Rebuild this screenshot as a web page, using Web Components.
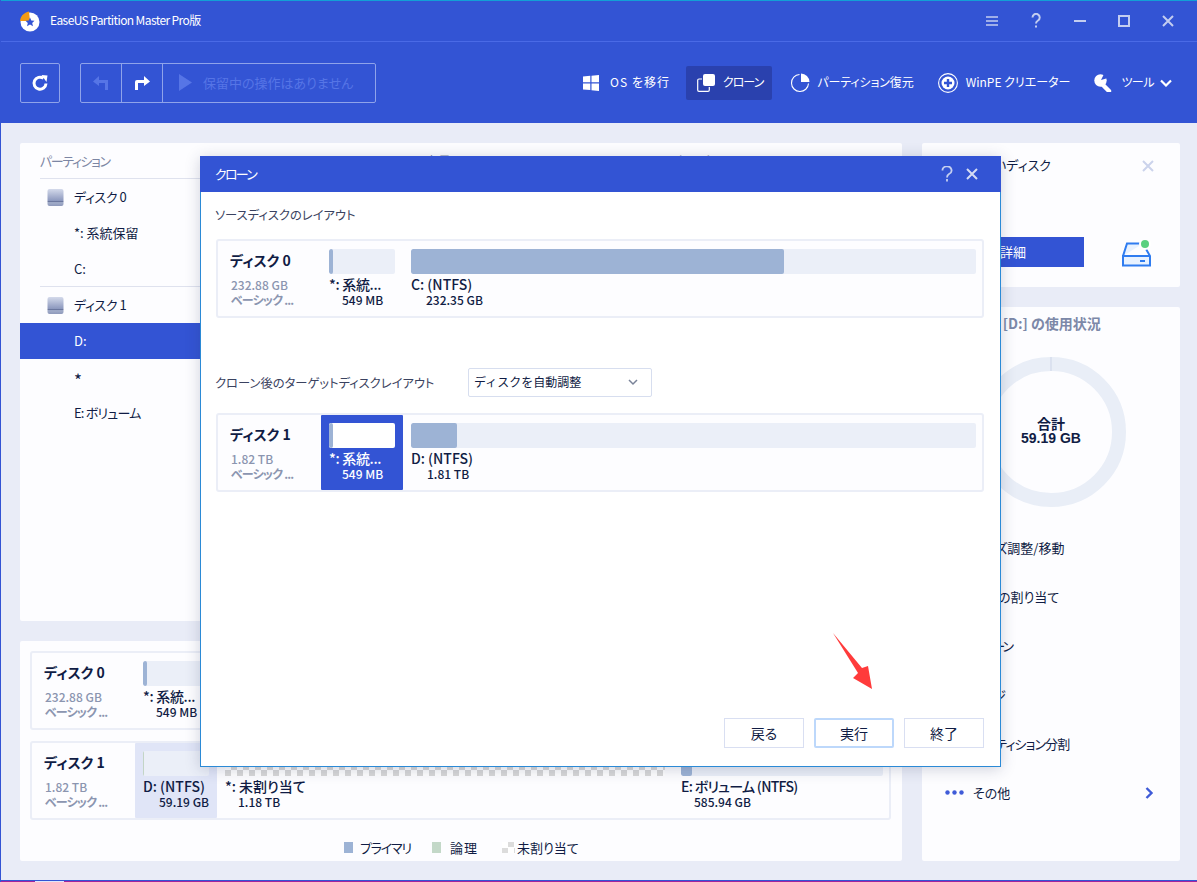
<!DOCTYPE html>
<html lang="ja"><head><meta charset="utf-8"><title>EaseUS</title>
<style>
html,body{margin:0;padding:0;width:1197px;height:882px;overflow:hidden;background:#e9ecf7}
body{font:13px/1.2 "Noto Sans CJK JP","Noto Sans",sans-serif;font-feature-settings:"palt";color:#101c44}
</style></head><body>
<em-app>
  <em-titlebar slot="head"></em-titlebar>
  <em-toolbar slot="head"></em-toolbar>
  <em-panel slot="main" style="height:478px"><part-list></part-list></em-panel>
  <em-panel slot="main" style="height:220px;margin-top:20px"><disk-map></disk-map></em-panel>
  <em-panel slot="side" style="height:144px"><news-card></news-card></em-panel>
  <em-panel slot="side" style="height:554px;margin-top:20px"><usage-card></usage-card></em-panel>
  <clone-dialog slot="over"></clone-dialog>
</em-app>
<script>
const def=(name,html)=>{customElements.define(name,class extends HTMLElement{
  constructor(){super();this.attachShadow({mode:'open'}).innerHTML=html;}
});};

def('em-app',`<style>
:host{display:block;position:relative;width:1197px;height:882px;box-sizing:border-box;border-left:1px solid #3354d4;overflow:hidden}
header{margin-left:-1px;background:#3354d4;height:123px;border-top:1px solid #12a0d6;box-sizing:border-box}
.body{display:grid;grid-template-columns:882px 258px;gap:20px;padding:20px 0 0 19px}
.edge{position:absolute;left:-1px;right:0;bottom:0;height:2px;background:linear-gradient(#3354d4 50%,#a3249c 50%)}
.edge i{display:block;margin:1px 0 0 35px;width:29px;height:1px;background:#dfe6fb}
</style><header><slot name="head"></slot></header>
<div class="body"><div><slot name="main"></slot></div><div><slot name="side"></slot></div></div>
<slot name="over"></slot><div class="edge"><i></i></div>`);

def('em-panel',`<style>:host{display:block;background:#fdfdff;border-radius:2px;overflow:hidden;box-sizing:border-box}</style><slot></slot>`);

def('em-titlebar',`<style>
:host{display:flex;align-items:center;height:40px;border-bottom:1px solid #4a6ae6;padding-left:20px;color:#fff;font-size:12px}
svg.logo{width:20px;height:22px;margin-right:10px}
span{flex:1;margin-top:-1px;letter-spacing:-.6px}
.w{display:flex;gap:28px;padding-right:21px}
svg.b{width:16px;height:16px;fill:none;stroke:#c3cdf0;stroke-width:2;display:block}
</style>
<svg class="logo" viewBox="0 0 20 22"><circle cx="10" cy="12" r="9.500" fill="#fff"/><path d="M0 11C.5 6 4 2.500 9 1.500L10 11Z" fill="#f39a12"/><path d="M10 7.500L11.300 10.500 14.500 10.800 12.200 13 13 16.200 10 14.600 7 16.200 7.800 13 5.500 10.800 8.700 10.500Z" fill="#3354d4"/></svg>
<span>EaseUS Partition Master Pro版</span>
<div class="w">
<svg class="b" viewBox="0 0 16 16" style="stroke-width:1.700"><path d="M2 4h12M2 8h12M2 12h12"/></svg>
<svg class="b" viewBox="0 0 16 16"><path d="M4.500 4.500a3.600 3.600 0 1 1 5.500 3c-1.500.9-2 1.500-2 3"/><path d="M8 12.500v2"/></svg>
<svg class="b" viewBox="0 0 16 16"><path d="M2 8h12"/></svg>
<svg class="b" viewBox="0 0 16 16"><path d="M3 3h10v10H3z"/></svg>
<svg class="b" viewBox="0 0 16 16"><path d="M3 3l10 10M13 3L3 13"/></svg>
</div>`);

def('tool-btn',`<style>
:host{display:flex;align-items:center;height:34px;color:#fff;font-size:12px;gap:8px;border-radius:2px;white-space:nowrap}
:host([active]){background:#2a41ae;padding:0 9px 0 11px}
</style><slot name="icon"></slot><slot></slot>`);

def('em-toolbar',`<style>
:host{display:flex;align-items:center;height:81px;padding:0 25px 0 20px;box-sizing:border-box}
.box{border:1px solid #8fa3ea;border-radius:2px;height:40px;box-sizing:border-box;display:flex;align-items:stretch}
.cell{width:41px;display:flex;align-items:center;justify-content:center;border-right:1px solid #8fa3ea;box-sizing:border-box}
.cell.last{width:auto;flex:1;border:0;justify-content:flex-start;padding-left:16px;gap:11px;color:#5675e6;font-size:13px;white-space:nowrap}
.grp{margin-left:20px;width:296px}
.nav{margin-left:auto;display:flex;align-items:center}
</style>
<div class="box" style="width:40px"><div class="cell" style="border:0;width:38px"><svg width="18" height="18" viewBox="0 0 18 18"><path d="M15 9.500A6 6 0 1 1 12.500 4.300" fill="none" stroke="#fff" stroke-width="3"/><path d="M10.500 1L16.500 1.500 15.500 8Z" fill="#fff"/></svg></div></div>
<div class="box grp">
<div class="cell"><svg width="18" height="16" viewBox="0 0 18 16"><path d="M7 1L1 6.500 7 11V8H13V15H16V5H7Z" fill="#5675e6"/></svg></div>
<div class="cell"><svg width="18" height="16" viewBox="0 0 18 16"><path d="M11 1L17 6.500 11 11V8H5V15H2V7Q2 5 4 5H11Z" fill="#fff"/></svg></div>
<div class="cell last"><svg width="13" height="17" viewBox="0 0 13 17"><path d="M0 0L13 8.500 0 17Z" fill="#5675e6"/></svg><span>保留中の操作はありません</span></div>
</div>
<div class="nav">
<tool-btn style="gap:11px;letter-spacing:1px"><svg slot="icon" width="16" height="16" viewBox="0 0 16 16" fill="#fff"><path d="M0 1.500L7.300 .8V7.300H0ZM8.500 .7L16 0V7.300H8.500ZM0 8.500H7.300V15L0 14.400ZM8.500 8.500H16V16L8.500 15.200Z"/></svg>OS を移行</tool-btn>
<tool-btn active style="margin-left:16px;letter-spacing:-1px"><svg slot="icon" width="18" height="18" viewBox="0 0 18 18"><rect x="6" y="0" width="12" height="12" rx="2" fill="#fff"/><path d="M5 5H2Q.7 5 .7 6.300V16Q.7 17.300 2 17.300H11Q12.300 17.300 12.300 16V13" fill="none" stroke="#fff" stroke-width="1.200"/></svg>クローン</tool-btn>
<tool-btn style="margin-left:18px;gap:7px;letter-spacing:-.1px"><svg slot="icon" width="20" height="20" viewBox="0 0 20 20"><path d="M9.500 1.500A8.500 8.500 0 1 0 18.500 10.500" fill="none" stroke="#fff" stroke-width="1.100"/><path d="M11 .5A8.700 8.700 0 0 1 19.500 9H11Z" fill="#fff"/></svg>パーティション復元</tool-btn>
<tool-btn style="margin-left:24px"><svg slot="icon" width="20" height="20" viewBox="0 0 20 20"><circle cx="10" cy="10" r="9.400" fill="none" stroke="#fff" stroke-width="1.100"/><circle cx="10" cy="10" r="6.500" fill="#fff"/><path d="M10 6v8M6 10h8" stroke="#3354d4" stroke-width="2.400"/></svg>WinPE クリエーター</tool-btn>
<tool-btn style="margin-left:24px;gap:9px"><svg slot="icon" width="18" height="18" viewBox="0 0 18 18"><circle cx="6.500" cy="6.500" r="6.200" fill="#fff"/><path d="M7 9L15 17" stroke="#fff" stroke-width="4.400" stroke-linecap="round"/><path d="M7 6L10 0H14V4Z" fill="#3354d4"/></svg><span style="letter-spacing:-.5px;margin-right:6px">ツール</span><svg width="12" height="8" viewBox="0 0 12 8" style="margin-left:-9px"><path d="M1 1.500L6 6.500 11 1.500" fill="none" stroke="#fff" stroke-width="2.200"/></svg></tool-btn>
</div>`);

def('part-row',`<style>
:host{display:flex;align-items:center;height:36px;padding-left:54px;color:#101c44;font-size:13px;box-sizing:border-box;position:relative}
:host([disk]){padding-left:27px;gap:10px;letter-spacing:-.4px}
:host([sel]){background:#3354d4;color:#fff}
:host([line])::after{content:"";position:absolute;left:20px;right:20px;bottom:0;height:1px;background:#dfe2ee}
svg{display:none;width:17px;height:17px;margin-top:1px}
:host([disk]) svg{display:block}
</style><svg viewBox="0 0 17 17"><defs><linearGradient id="g" x1="0" y1="0" x2="0" y2="1"><stop offset="0" stop-color="#d4daeb"/><stop offset=".7" stop-color="#8b97bd"/><stop offset=".72" stop-color="#5e6a94"/><stop offset=".8" stop-color="#a2adca"/><stop offset="1" stop-color="#8e99bb"/></linearGradient></defs><rect x="0.500" y="0" width="16" height="17" rx="2" fill="url(#g)"/></svg><slot></slot>`);

def('part-list',`<style>
:host{display:block}
.h{display:grid;grid-template-columns:250px 135px 250px 1fr;align-items:center;height:36px;padding-left:20px;color:#7c86a3;font-size:13px;position:relative}
.h::after{content:"";position:absolute;left:20px;right:20px;bottom:0;height:1px;background:#dfe2ee}
.h span:first-child{letter-spacing:-1.400px}
.big{font-size:17px;line-height:16px;margin-top:6px}
</style><div class="h"><span>パーティション</span><span>ファイルシステム</span><span>容量</span><span>タイプ</span></div>
<part-row disk>ディスク 0</part-row><part-row>*: 系統保留</part-row><part-row line>C:</part-row>
<part-row disk>ディスク 1</part-row><part-row sel>D:</part-row><part-row><span class="big">*</span></part-row><part-row style="letter-spacing:-.8px">E: ボリューム</part-row>`);

def('disk-part',`<style>
:host{display:block;padding:8px 8px 0;box-sizing:border-box;height:75px;width:82px;border-radius:1px;flex:none;color:#101c44;overflow:hidden}
:host([grow]){flex:1;width:auto}
:host([sel]){background:#3354d4;color:#fff}
:host([soft]){background:#e0e5f7}
:host([last]){padding-right:6px}
.bar{height:25px;background:#ebeff8;border-radius:2px;overflow:hidden}
:host([sel]) .bar{background:#fff}
.fill{height:100%;background:#9db3d5;border-radius:2px;width:var(--f,4px)}
:host([green]) .fill{background:#c3d5c6;width:1px}
:host([check]) .bar{border-radius:0;background:repeating-conic-gradient(#d8d8d8 0 25%,#fff 0 50%) 0 1px/12px 12px}
:host([check]) .fill{display:none}
.n{font-size:14px;font-weight:500;line-height:16px;margin-top:2px;white-space:nowrap}
.s{font-size:12px;font-weight:500;line-height:16px;padding-left:13px;white-space:nowrap}
::slotted(span){display:block}
</style><div class="bar"><div class="fill"></div></div><div class="n"><slot name="n"></slot></div><div class="s"><slot name="s"></slot></div>`);

def('disk-card',`<style>
:host{display:flex;height:79px;border:2px solid #ebeef7;border-radius:3px;box-sizing:border-box;background:#fdfdff;overflow:hidden}
.i{width:103px;flex:none;padding-left:13px;box-sizing:border-box}
.t{font-size:14px;font-weight:700;margin-top:10px;line-height:18px;color:#101c44;margin-left:-1px}
.d{color:#8b95b0;font-size:12px;line-height:15px;margin-top:8px;font-weight:500}
.b{color:#8b95b0;font-size:12px;line-height:15px;font-weight:700;letter-spacing:-.8px}
.p{display:flex;flex:1;min-width:0}
</style><div class="i"><div class="t"><slot name="t"></slot></div><div class="d"><slot name="d"></slot></div><div class="b">ベーシック ...</div></div><div class="p"><slot></slot></div>`);

def('disk-map',`<style>
:host{display:block;padding:10px 11px 0 10px}
disk-card+disk-card{margin-top:11px}
.lg{display:flex;align-items:center;margin-top:20px;font-size:13px;padding-left:314px;color:#101c44}
.lg i{display:block;width:9px;height:11px;margin-right:7px}
.lg span{white-space:nowrap}
</style>
<disk-card><span slot="t">ディスク 0</span><span slot="d">232.88 GB</span>
<disk-part><span slot="n" style="letter-spacing:-.3px">*: 系統...</span><span slot="s">549 MB</span></disk-part>
<disk-part grow last style="--f:66%"><span slot="n">C: (NTFS)</span><span slot="s" style="padding-left:2px">232.35 GB</span></disk-part></disk-card>
<disk-card><span slot="t">ディスク 1</span><span slot="d">1.82 TB</span>
<disk-part soft green><span slot="n">D: (NTFS)</span><span slot="s" style="padding-left:3px">59.19 GB</span></disk-part>
<disk-part check style="width:456px"><span slot="n">*: 未割り当て</span><span slot="s">1.18 TB</span></disk-part>
<disk-part grow last style="--f:11px"><span slot="n" style="letter-spacing:-.7px">E: ボリューム (NTFS)</span><span slot="s">585.94 GB</span></disk-part></disk-card>
<div class="lg"><i style="background:#9db3d5"></i><span style="letter-spacing:-1.200px;margin-right:21px">プライマリ</span><i style="background:#c3d8c8;margin-right:9px"></i><span style="margin-right:24px;letter-spacing:1px">論理</span><i style="width:13px;margin-right:2px;background:repeating-conic-gradient(#dcdcdc 0 25%,#fff 0 50%) 0 0/12px 11px"></i><span>未割り当て</span></div>`);

def('news-card',`<style>
:host{display:block;position:relative;height:144px;padding:13px 0 0 38px;box-sizing:border-box}
.x{position:absolute;right:26px;top:17px;width:12px;height:12px}
.bt{display:flex;align-items:center;width:124px;height:30px;background:#3354d4;color:#fff;margin-top:63px;padding-left:40px;box-sizing:border-box}
.r{display:flex;align-items:flex-start}
.r svg{margin-left:38px;margin-top:66px}
p{margin:0 0 0 10px;line-height:18px;white-space:nowrap}
</style><p>新しいディスク</p>
<svg class="x" viewBox="0 0 12 12"><path d="M1 1l10 10M11 1L1 11" stroke="#cbd3ec" stroke-width="2"/></svg>
<div class="r"><div class="bt">詳細</div><svg width="29" height="27" viewBox="0 0 29 27"><path d="M1 16L5 3.500H21M24 9L28 16V25.500H1V16H28" fill="#e8f2ff" stroke="#2f7cf0" stroke-width="2"/><path d="M18 21h5" stroke="#2f7cf0" stroke-width="2"/><circle cx="23" cy="4" r="6" fill="#fff"/><circle cx="23" cy="4" r="4" fill="#5ad07f"/></svg></div>`);

def('act-row',`<style>:host{display:block;height:49px;line-height:49px;padding-left:50px;font-size:13px;white-space:nowrap}</style><slot></slot>`);

def('usage-card',`<style>
:host{display:block;padding:7px 0 0 0}
h3{margin:0 0 0 27px;font-size:14px;line-height:18px;color:#7c88a8;font-weight:700;white-space:nowrap}
.d{position:relative;width:150px;height:150px;margin:25px 0 0 54px}
.d svg{display:block}
.c{position:absolute;inset:0;display:flex;flex-direction:column;align-items:center;justify-content:center;color:#101c44;font-weight:700;font-size:14px;line-height:15px;padding-bottom:2px;box-sizing:border-box}
.c .g{font-family:"Liberation Sans",sans-serif}
.o{display:flex;align-items:center;height:49px;padding:0 26px 0 23px;gap:9px}
.o span{flex:1}
.l{margin-top:16px}
</style><h3>ドライブ [D:] の使用状況</h3>
<div class="d"><svg width="150" height="150" viewBox="0 0 150 150"><circle cx="75" cy="75" r="68" fill="none" stroke="#e9eef7" stroke-width="14"/><path d="M75 0V14" stroke="#cdd5e8"/></svg><div class="c"><div>合計</div><div class="g">59.19 GB</div></div></div>
<div class="l"><act-row>サイズ調整/移動</act-row><act-row>領域の割り当て</act-row><act-row style="letter-spacing:-2px">クローン</act-row><act-row style="letter-spacing:-1.500px">マージ</act-row><act-row style="letter-spacing:-.9px">パーティション分割</act-row></div>
<div class="o"><svg width="19" height="5" viewBox="0 0 19 5" fill="#3f5bd8"><circle cx="2.500" cy="2.500" r="2.200"/><circle cx="9.500" cy="2.500" r="2.200"/><circle cx="16.500" cy="2.500" r="2.200"/></svg><span>その他</span><svg width="9" height="12" viewBox="0 0 9 12"><path d="M1.500 1L6.500 6 1.500 11" fill="none" stroke="#3f5bd8" stroke-width="2.400"/></svg></div>`);

def('dlg-btn',`<style>
:host{display:flex;align-items:center;justify-content:center;width:80px;height:30px;border:1px solid #d9dff2;box-sizing:border-box;font-size:14px;color:#101c44;background:#fff}
:host([focus]){border:2px solid #bdd8fb;border-radius:2px}
</style><slot></slot>`);

def('clone-dialog',`<style>
:host{position:absolute;left:199px;top:156px;width:801px;height:611px;box-sizing:border-box;border:1px solid #2b8ad6;border-top:0;background:#fff;box-shadow:0 2px 14px rgba(40,50,90,.22);display:flex;flex-direction:column}
.t{height:36px;margin:0 -1px;flex:none;background:#3354d4;color:#fff;display:flex;align-items:center;padding:0 23px 0 15px;font-size:13px}
.t span{flex:1;letter-spacing:-1.800px}
.t svg{display:block;margin-left:13px}
.c{flex:1;padding:0 16px 18px 14px;display:flex;flex-direction:column}
.l{line-height:18px;white-space:nowrap;color:#3a4260;font-size:12.300px}
.l.fix{width:253px;flex:none}
disk-card{margin:0 0 0 1px}
.sel{display:flex;align-items:center;width:184px;height:29px;border:1px solid #d7deef;border-radius:2px;box-sizing:border-box;padding:0 13px 0 5px;font-size:12px;font-feature-settings:normal;justify-content:space-between;white-space:nowrap}
.r{display:flex;align-items:center}
.f{margin-top:auto;display:flex;justify-content:flex-end;gap:10px}
.a{position:absolute;left:629px;top:476px}
</style>
<div class="t"><span>クローン</span>
<svg width="12" height="16" viewBox="0 0 12 16"><path d="M1.500 4.500a4.500 4 0 1 1 6.500 3.500c-1.500.9-2 1.500-2 3.500M6 13v2.500" fill="none" stroke="#c5cff0" stroke-width="1.800"/></svg>
<svg width="12" height="12" viewBox="0 0 12 12"><path d="M1 1l10 10M11 1L1 11" stroke="#d5dcf4" stroke-width="2"/></svg></div>
<div class="c">
<div class="l" style="margin-top:14px">ソースディスクのレイアウト</div>
<disk-card style="margin-top:15px"><span slot="t">ディスク 0</span><span slot="d">232.88 GB</span>
<disk-part><span slot="n" style="letter-spacing:-.3px">*: 系統...</span><span slot="s">549 MB</span></disk-part>
<disk-part grow last style="--f:66%"><span slot="n">C: (NTFS)</span><span slot="s" style="padding-left:2px">232.35 GB</span></disk-part></disk-card>
<div class="r" style="margin-top:50px"><div class="l fix">クローン後のターゲットディスクレイアウト</div><div class="sel">ディスクを自動調整<svg width="10" height="7" viewBox="0 0 10 7"><path d="M1 1l4 4 4-4" fill="none" stroke="#7a8399" stroke-width="1.500"/></svg></div></div>
<disk-card style="margin-top:16px"><span slot="t">ディスク 1</span><span slot="d">1.82 TB</span>
<disk-part sel><span slot="n" style="letter-spacing:-.3px">*: 系統...</span><span slot="s">549 MB</span></disk-part>
<disk-part grow last style="--f:46px"><span slot="n">D: (NTFS)</span><span slot="s" style="padding-left:3px">1.81 TB</span></disk-part></disk-card>
<div class="f"><dlg-btn>戻る</dlg-btn><dlg-btn focus>実行</dlg-btn><dlg-btn>終了</dlg-btn></div>
</div>
<svg class="a" width="42" height="60" viewBox="0 0 42 60"><path d="M3 1L32 36 38 34 42 57 23 46 28 41Z" fill="#ff3b3b"/></svg>`);
</script>
</body></html>
